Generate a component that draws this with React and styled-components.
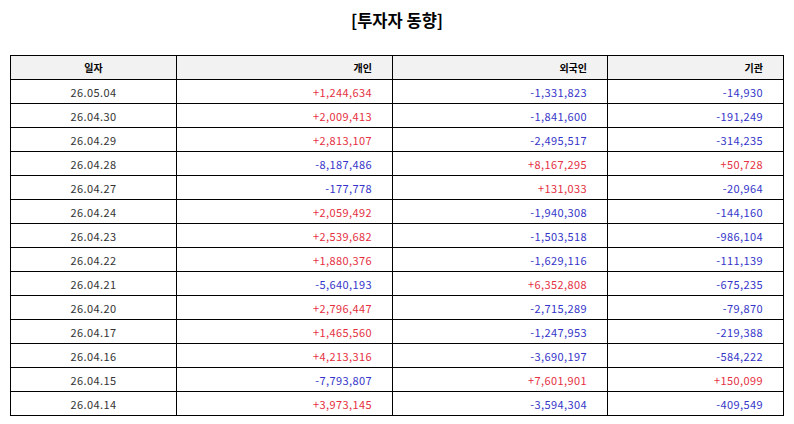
import React from 'react';
import styled, { createGlobalStyle } from 'styled-components';

const GlobalStyle = createGlobalStyle`
  html, body {
    margin: 0;
    padding: 0;
    background: #ffffff;
  }
  body {
    font-family: "Noto Sans CJK KR", "Noto Sans", sans-serif;
    color: #222;
  }
`;

const Page = styled.div`
  padding: 6px 10px 0 10px;
`;

const Title = styled.h1`
  margin: 0 0 21px 0;
  text-align: center;
  font-size: 16.5px;
  font-weight: 700;
  line-height: 28px;
  color: #000;
`;

const Table = styled.table`
  width: 100%;
  border-collapse: collapse;
  table-layout: fixed;
  font-size: 11px;
`;

const HeadCell = styled.th`
  height: 23px;
  padding: 0 20px;
  border: 1px solid #000;
  background: #f2f2f2;
  font-size: 10px;
  font-weight: 700;
  color: #000;
  text-align: ${(p) => (p.$center ? 'center' : 'right')};
`;

const Cell = styled.td`
  height: 23px;
  padding: 0 20px;
  border: 1px solid #000;
  letter-spacing: 0.4px;
  text-align: ${(p) => (p.$center ? 'center' : 'right')};
  color: ${(p) => (p.$sign === '+' ? '#e5303f' : p.$sign === '-' ? '#3535c9' : '#333')};
`;

const rows = [
  ['26.05.04', '+1,244,634', '-1,331,823', '-14,930'],
  ['26.04.30', '+2,009,413', '-1,841,600', '-191,249'],
  ['26.04.29', '+2,813,107', '-2,495,517', '-314,235'],
  ['26.04.28', '-8,187,486', '+8,167,295', '+50,728'],
  ['26.04.27', '-177,778', '+131,033', '-20,964'],
  ['26.04.24', '+2,059,492', '-1,940,308', '-144,160'],
  ['26.04.23', '+2,539,682', '-1,503,518', '-986,104'],
  ['26.04.22', '+1,880,376', '-1,629,116', '-111,139'],
  ['26.04.21', '-5,640,193', '+6,352,808', '-675,235'],
  ['26.04.20', '+2,796,447', '-2,715,289', '-79,870'],
  ['26.04.17', '+1,465,560', '-1,247,953', '-219,388'],
  ['26.04.16', '+4,213,316', '-3,690,197', '-584,222'],
  ['26.04.15', '-7,793,807', '+7,601,901', '+150,099'],
  ['26.04.14', '+3,973,145', '-3,594,304', '-409,549'],
];

const App = () => (
  <Page>
    <GlobalStyle />
    <Title>[투자자 동향]</Title>
    <Table>
      <colgroup>
        <col style={{ width: '166px' }} />
        <col style={{ width: '216px' }} />
        <col style={{ width: '215px' }} />
        <col />
      </colgroup>
      <thead>
        <tr>
          <HeadCell $center>일자</HeadCell>
          <HeadCell>개인</HeadCell>
          <HeadCell>외국인</HeadCell>
          <HeadCell>기관</HeadCell>
        </tr>
      </thead>
      <tbody>
        {rows.map(([date, ...vals]) => (
          <tr key={date}>
            <Cell $center>{date}</Cell>
            {vals.map((v, i) => (
              <Cell key={i} $sign={v[0]}>
                {v}
              </Cell>
            ))}
          </tr>
        ))}
      </tbody>
    </Table>
  </Page>
);

export default App;
